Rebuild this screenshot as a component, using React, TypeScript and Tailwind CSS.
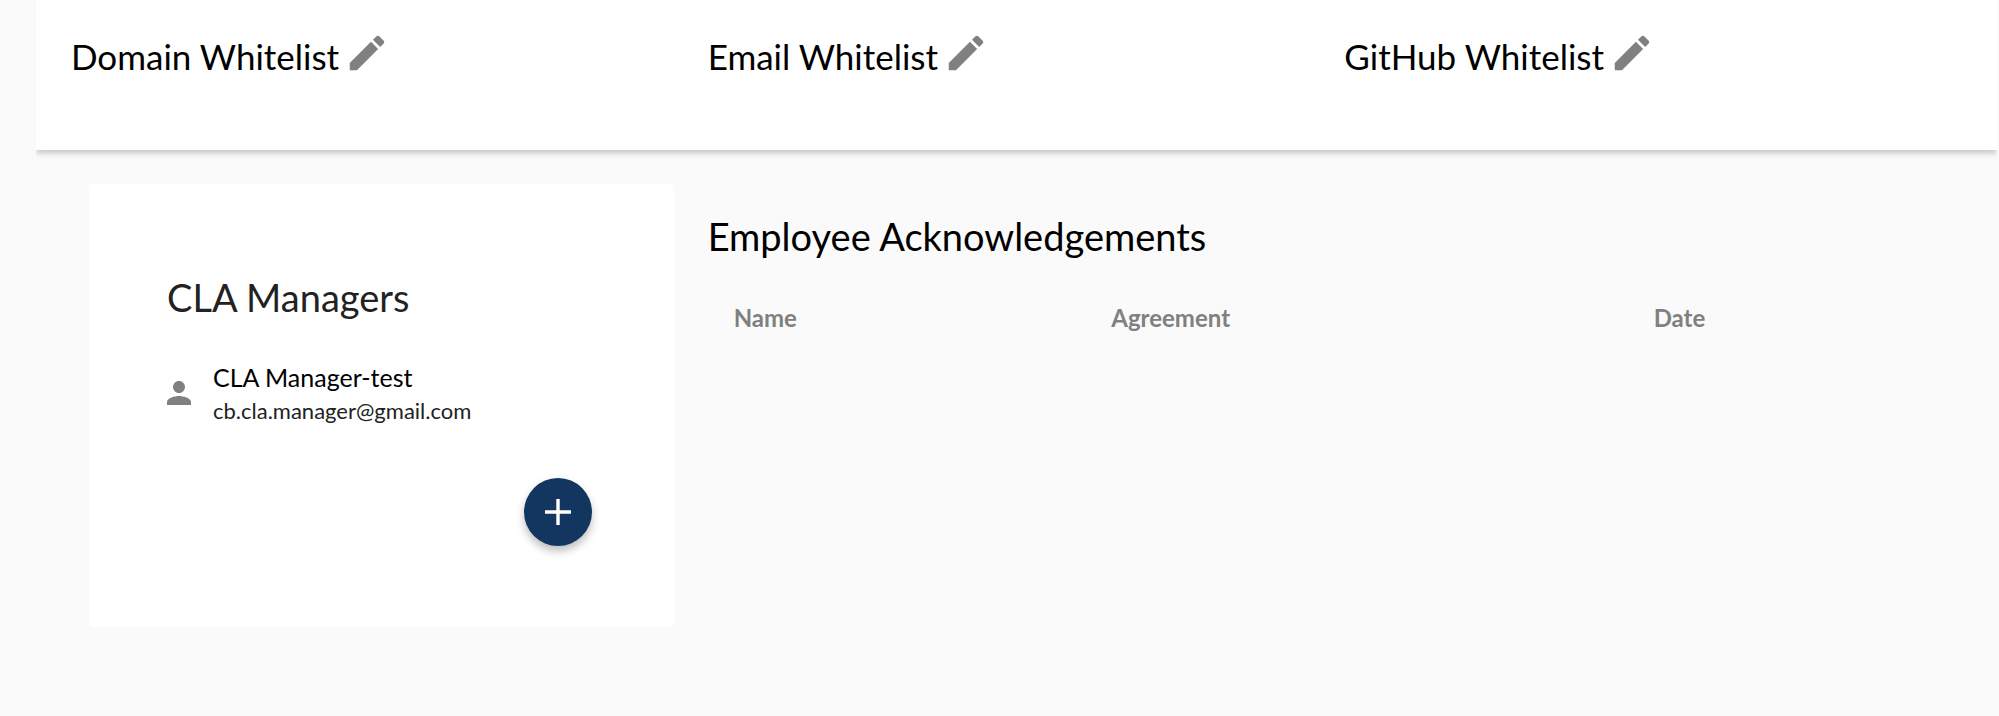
import { MdEdit, MdPerson } from "react-icons/md";

const whitelists = ["Domain Whitelist", "Email Whitelist", "GitHub Whitelist"];

const managers = [{ name: "CLA Manager-test", email: "cb.cla.manager@gmail.com" }];

function WhitelistPanel({ title }: { title: string }) {
  return (
    <section className="flex items-start gap-[5px] pl-2">
      <h2 className="pt-1 text-[35px] leading-11 whitespace-nowrap text-black">{title}</h2>
      <button type="button" aria-label={`Edit ${title}`} className="cursor-pointer text-[#808080]">
        <MdEdit className="size-[46px]" />
      </button>
    </section>
  );
}

function ManagersCard() {
  return (
    <section className="relative m-[26px] mt-0 h-[443px] rounded bg-white px-[78px] pt-[89px]">
      <h2 className="text-[38px] leading-12 text-[#222]">CLA Managers</h2>
      <ul className="mt-[38px]">
        {managers.map((manager) => (
          <li key={manager.email} className="flex items-center gap-4">
            <MdPerson className="-ml-1.5 size-9 shrink-0 text-[#808080]" />
            <div>
              <p className="text-[25px] leading-9 text-black">{manager.name}</p>
              <p className="text-[22px] leading-8 text-[#222]">{manager.email}</p>
            </div>
          </li>
        ))}
      </ul>
      <button
        type="button"
        aria-label="Add CLA manager"
        className="absolute right-[82px] bottom-[81px] flex size-[68px] cursor-pointer items-center justify-center rounded-full bg-[#12365f] text-white shadow-[0_5px_9px_rgba(0,0,0,0.26)]"
      >
        <svg viewBox="0 0 26 26" className="size-[26px]" fill="none" stroke="currentColor" strokeWidth="3.4">
          <path d="M13 0v26M0 13h26" />
        </svg>
      </button>
    </section>
  );
}

function Acknowledgements() {
  return (
    <section className="col-span-2 pr-1 pl-2">
      <h2 className="pt-7 text-[38px] leading-12 text-black">Employee Acknowledgements</h2>
      <table className="mt-10 w-full table-fixed text-left text-2xl leading-9 text-[#808080]">
        <thead>
          <tr>
            <th scope="col" className="w-[32%] pl-[26px] font-bold">Name</th>
            <th scope="col" className="w-[43%] font-bold">Agreement</th>
            <th scope="col" className="font-bold">Date</th>
          </tr>
        </thead>
        <tbody />
      </table>
    </section>
  );
}

export default function App() {
  return (
    <main className="min-h-screen bg-[#fafafa] pr-0.5 pl-9 font-['Lato',sans-serif]">
      <div className="grid grid-cols-3 bg-white pt-[30px] pr-6 pb-[72px] pl-[27px] shadow-[0_3px_6px_rgba(0,0,0,0.22)] [clip-path:inset(0_0_-12px_0)]">
        {whitelists.map((title) => (
          <WhitelistPanel key={title} title={title} />
        ))}
      </div>
      <div className="grid grid-cols-3 pt-[34px] pr-6 pl-[27px]">
        <ManagersCard />
        <Acknowledgements />
      </div>
    </main>
  );
}
